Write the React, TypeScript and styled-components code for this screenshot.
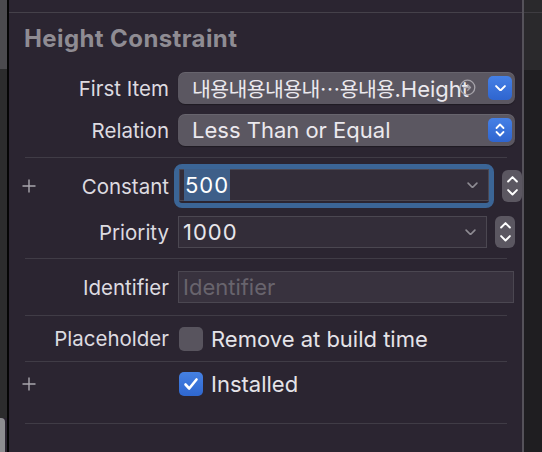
import React from "react";
import styled, { createGlobalStyle } from "styled-components";

const Global = createGlobalStyle`
  html, body { margin: 0; padding: 0; background: #2b2531; }
  body { width: 542px; height: 452px; overflow: hidden; font-family: Inter, "Noto Sans CJK KR", sans-serif; }
`;

const Shell = styled.div`
  display: flex;
  width: 542px;
  height: 452px;
`;

const LeftStrip = styled.div`
  width: 7px;
  display: flex;
  flex-direction: column;
`;

const StripPart = styled.div<{ $h?: number; $bg: string; $grow?: boolean }>`
  height: ${(p) => (p.$h ? `${p.$h}px` : "auto")};
  flex: ${(p) => (p.$grow ? 1 : "none")};
  background: ${(p) => p.$bg};
`;

const StripTab = styled.div`
  height: 34px;
  width: 5px;
  background: #8d8d90;
  border-top-right-radius: 4px;
`;

const BlackLine = styled.div`
  width: 2px;
  background: #050505;
`;

const Panel = styled.div`
  flex: 1;
  background: #2b2531;
  display: flex;
  flex-direction: column;
`;

const TopLine = styled.div`
  margin-top: 12px;
  height: 1px;
  background: #45414a;
`;

const Heading = styled.div`
  margin: 12px 0 0 15px;
  height: 42px;
  line-height: 28px;
  font-size: 24px;
  font-weight: 700;
  color: #8f8c93;
  letter-spacing: 0.4px;
`;

const Row = styled.div<{ $h: number }>`
  height: ${(p) => p.$h}px;
  display: flex;
  align-items: center;
`;

const Plus = styled.div`
  width: 16px;
  margin-left: 13px;
  display: flex;
  align-items: center;
`;

const Label = styled.div<{ $plus?: boolean }>`
  width: ${(p) => (p.$plus ? 131 : 160)}px;
  text-align: right;
  padding-right: 9px;
  font-size: 20.5px;
  color: #dddbe0;
  flex: none;
`;

const Sep = styled.div<{ $mt?: number }>`
  height: 1px;
  margin: ${(p) => p.$mt ?? 0}px 15px 0 16px;
  background: #403c46;
`;

const Popup = styled.div`
  width: 337px;
  height: 32px;
  box-sizing: border-box;
  border-radius: 7px;
  background: #5b5761;
  box-shadow: inset 0 1px 0 rgba(255, 255, 255, 0.08), 0 1px 1px rgba(0, 0, 0, 0.3);
  display: flex;
  align-items: center;
  padding: 0 3px 0 14px;
  position: relative;
`;

const PopupText = styled.div`
  flex: 1;
  font-size: 22px;
  color: #ebe9ee;
  white-space: nowrap;
  overflow: hidden;
`;

const Hangul = styled.span`
  font-size: 20.5px;
  letter-spacing: -0.6px;
`;

const BlueButton = styled.div`
  width: 24px;
  height: 24px;
  border-radius: 5px;
  background: linear-gradient(#4580e6, #2f65cf);
  display: flex;
  align-items: center;
  justify-content: center;
  flex: none;
`;

const JumpIcon = styled.svg`
  position: absolute;
  left: 281px;
  top: 7px;
`;

const FocusRing = styled.div`
  width: 320px;
  height: 44px;
  box-sizing: border-box;
  border: 5px solid #3b6596;
  border-radius: 8px;
  margin-left: -4px;
  display: flex;
`;

const Field = styled.div<{ $w?: number; $bg?: string }>`
  width: ${(p) => (p.$w ? `${p.$w}px` : "auto")};
  flex: ${(p) => (p.$w ? "none" : 1)};
  height: 32px;
  box-sizing: border-box;
  background: ${(p) => p.$bg ?? "#332d39"};
  border: 1px solid #4b4751;
  display: flex;
  align-items: center;
  padding: 0 10px 0 4px;
`;

const FieldText = styled.div<{ $placeholder?: boolean; $num?: boolean }>`
  flex: 1;
  font-size: 22px;
  letter-spacing: ${(p) => (p.$num ? "1px" : "0")};
  color: ${(p) => (p.$placeholder ? "#68646d" : "#e8e6eb")};
`;

const Selected = styled.span`
  background: #3e5f89;
  color: #ffffff;
  padding: 3px 1px 3px 1px;
`;

const Stepper = styled.div`
  width: 20px;
  height: 32px;
  border-radius: 6px;
  background: #5b5761;
  margin-left: 8px;
  display: flex;
  flex-direction: column;
  align-items: center;
  justify-content: space-around;
  padding: 3px 0;
  box-sizing: border-box;
`;

const Check = styled.div<{ $on?: boolean }>`
  width: 24px;
  height: 24px;
  border-radius: 5px;
  box-sizing: border-box;
  background: ${(p) => (p.$on ? "linear-gradient(#4581e3, #2f67cf)" : "#58545e")};
  display: flex;
  align-items: center;
  justify-content: center;
  margin-left: 1px;
`;

const CheckText = styled.div`
  margin-left: 8px;
  font-size: 22px;
  color: #e5e3e8;
`;

const Controls = styled.div`
  display: flex;
  align-items: center;
`;

const RightLine = styled.div`
  width: 2px;
  background: #55525a;
`;

const RightStrip = styled.div`
  flex: 1;
  display: flex;
  flex-direction: column;
`;

const SmallChev = styled.div`
  display: flex;
  align-items: center;
`;

const ChevDown = ({ w = 10, c = "#fff", sw = 1.8 }: { w?: number; c?: string; sw?: number }) => (
  <svg width={w} height={w * 0.6} viewBox="0 0 10 6">
    <path d="M1 1 L5 5 L9 1" fill="none" stroke={c} strokeWidth={sw} strokeLinecap="round" strokeLinejoin="round" />
  </svg>
);

const ChevUp = ({ w = 10, c = "#fff", sw = 1.8 }: { w?: number; c?: string; sw?: number }) => (
  <svg width={w} height={w * 0.6} viewBox="0 0 10 6">
    <path d="M1 5 L5 1 L9 5" fill="none" stroke={c} strokeWidth={sw} strokeLinecap="round" strokeLinejoin="round" />
  </svg>
);

const UpDown = () => (
  <svg width="12" height="16" viewBox="0 0 12 16">
    <path d="M2.5 6 L6 2.5 L9.5 6 M2.5 10 L6 13.5 L9.5 10" fill="none" stroke="#fff" strokeWidth="1.8" strokeLinecap="round" strokeLinejoin="round" />
  </svg>
);

const PlusIcon = () => (
  <svg width="14" height="14" viewBox="0 0 14 14">
    <path d="M7 0.5 V13.5 M0.5 7 H13.5" stroke="#a9a6ad" strokeWidth="1.4" />
  </svg>
);

export default function App() {
  return (
    <>
      <Global />
      <Shell>
        <LeftStrip>
          <StripPart $h={69} $bg="#4b4a4e" />
          <StripPart $grow $bg="#2c2c2d" />
          <StripTab />
        </LeftStrip>
        <BlackLine />
        <Panel>
          <TopLine />
          <Heading>Height Constraint</Heading>

          <Row $h={42}>
            <Label>First Item</Label>
            <Popup>
              <PopupText>
                <Hangul>내용내용내용내⋯용내용</Hangul>.Height
              </PopupText>
              <JumpIcon width="17" height="17" viewBox="0 0 17 17">
                <circle cx="8.5" cy="8.5" r="7.3" fill="none" stroke="#a6a3aa" strokeWidth="1.3" />
                <path d="M5 8.5 H11.5 M8.7 5.7 L11.5 8.5 L8.7 11.3" fill="none" stroke="#a6a3aa" strokeWidth="1.3" strokeLinecap="round" strokeLinejoin="round" />
              </JumpIcon>
              <BlueButton>
                <ChevDown w={11} />
              </BlueButton>
            </Popup>
          </Row>
          <Row $h={42}>
            <Label>Relation</Label>
            <Popup>
              <PopupText>Less Than or Equal</PopupText>
              <BlueButton>
                <UpDown />
              </BlueButton>
            </Popup>
          </Row>
          <Sep $mt={6} />

          <Row $h={56}>
            <Plus>
              <PlusIcon />
            </Plus>
            <Label $plus>Constant</Label>
            <Controls>
              <FocusRing>
                <Field>
                  <FieldText $num>
                    <Selected>500</Selected>
                  </FieldText>
                  <SmallChev>
                    <ChevDown w={11} c="#8e8b93" sw={1.5} />
                  </SmallChev>
                </Field>
              </FocusRing>
              <Stepper>
                <ChevUp w={11} />
                <ChevDown w={11} />
              </Stepper>
            </Controls>
          </Row>
          <Row $h={36}>
            <Label>Priority</Label>
            <Controls>
              <Field $w={309}>
                <FieldText $num>1000</FieldText>
                <SmallChev>
                  <ChevDown w={11} c="#8e8b93" sw={1.5} />
                </SmallChev>
              </Field>
              <Stepper>
                <ChevUp w={11} />
                <ChevDown w={11} />
              </Stepper>
            </Controls>
          </Row>
          <Sep $mt={8} />

          <Row $h={56}>
            <Label>Identifier</Label>
            <Field $w={336} $bg="#38323e">
              <FieldText $placeholder>Identifier</FieldText>
            </Field>
          </Row>
          <Sep />

          <Row $h={45}>
            <Label>Placeholder</Label>
            <Check />
            <CheckText>Remove at build time</CheckText>
          </Row>
          <Sep />

          <Row $h={44}>
            <Plus>
              <PlusIcon />
            </Plus>
            <Label $plus />
            <Check $on>
              <svg width="16" height="14" viewBox="0 0 16 14">
                <path d="M2.5 7.5 L6.2 11.5 L13.5 2.5" fill="none" stroke="#fff" strokeWidth="2.6" strokeLinecap="round" strokeLinejoin="round" />
              </svg>
            </Check>
            <CheckText>Installed</CheckText>
          </Row>
          <Sep $mt={17} />
        </Panel>
        <RightLine />
        <RightStrip>
          <StripPart $h={12} $bg="#2a292c" />
          <StripPart $h={1} $bg="#3e3c41" />
          <StripPart $h={57} $bg="#2a292c" />
          <StripPart $grow $bg="#1f1e21" />
        </RightStrip>
      </Shell>
    </>
  );
}
